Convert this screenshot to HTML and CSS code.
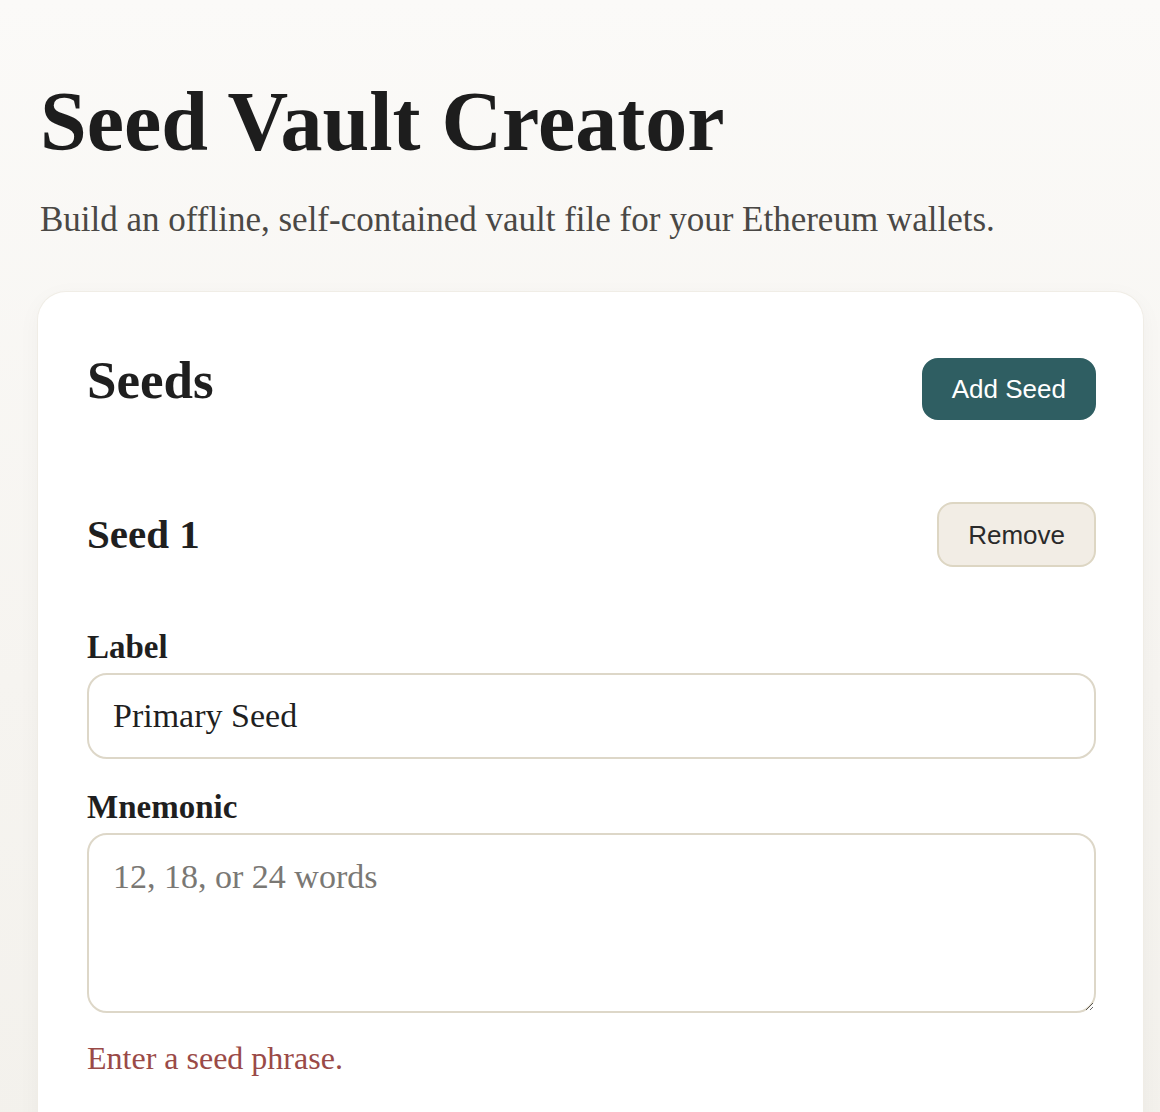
FILE: index.html
```html
<!DOCTYPE html>
<html lang="en">
<head>
<meta charset="utf-8">
<title>Seed Vault Creator</title>
<link rel="stylesheet" href="styles.css">
</head>
<body>
<main class="page">
  <h1 class="title">Seed Vault Creator</h1>
  <p class="subtitle">Build an offline, self-contained vault file for your Ethereum wallets.</p>
  <section class="card">
    <div class="card-head">
      <h2 class="card-title">Seeds</h2>
      <button class="btn btn-primary" type="button">Add Seed</button>
    </div>
    <div class="seed">
      <div class="seed-head">
        <h3 class="seed-title">Seed 1</h3>
        <button class="btn btn-secondary" type="button">Remove</button>
      </div>
      <label class="field-label" for="label1">Label</label>
      <input class="field-input" id="label1" type="text" value="Primary Seed">
      <label class="field-label field-label-gap" for="mn1">Mnemonic</label>
      <textarea class="field-textarea" id="mn1" placeholder="12, 18, or 24 words"></textarea>
      <p class="error">Enter a seed phrase.</p>
    </div>
  </section>
</main>
</body>
</html>
```

FILE: styles.css
```css
html, body {
  margin: 0;
  padding: 0;
}
body {
  background: linear-gradient(180deg, #fbfaf8 0%, #f6f4f0 60%, #f3f1ec 100%);
  min-height: 1112px;
  font-family: "Liberation Serif", "Times New Roman", serif;
  color: #1f1f1f;
}
.page {
  padding: 76px 0 0 38px;
}
.title {
  margin: 0 0 0 2px;
  font-size: 84px;
  line-height: 1.1;
  font-weight: 700;
  color: #1d1d1d;
}
.subtitle {
  margin: 27px 0 0 2px;
  font-size: 35px;
  line-height: 1.4;
  color: #4a4845;
}
.card {
  margin-top: 48px;
  width: 1105px;
  box-sizing: border-box;
  background: #ffffff;
  border-radius: 28px 28px 0 0;
  padding: 57px 47px 60px 49px;
  box-shadow: 0 0 0 1px #f0ede6, 0 6px 24px rgba(60, 50, 30, 0.04);
  min-height: 819px;
}
.card-head {
  display: flex;
  justify-content: space-between;
  align-items: baseline;
}
.card-title {
  margin: 0;
  font-size: 53px;
  line-height: 1.2;
  font-weight: 700;
}
.btn {
  font-family: "Liberation Sans", Arial, sans-serif;
  font-size: 26px;
  line-height: 30px;
  border-radius: 16px;
  cursor: pointer;
}
.btn-primary {
  background: #2f5e62;
  color: #ffffff;
  border: 2px solid #2f5e62;
  padding: 14px 28px;
}
.btn-secondary {
  background: #f2ede5;
  color: #2a2a2a;
  border: 2px solid #ddd6c3;
  padding: 16px 29px 15px;
}
.seed {
  margin-top: 82px;
}
.seed-head {
  display: flex;
  justify-content: space-between;
  align-items: center;
}
.seed-title {
  margin: 0;
  font-size: 41px;
  line-height: 1.2;
  font-weight: 700;
}
.field-label {
  display: block;
  margin: 61px 0 5px;
  font-size: 33px;
  line-height: 1.2;
  font-weight: 700;
  color: #1f1f1f;
}
.field-label-gap {
  margin-top: 29px;
}
.field-input,
.field-textarea {
  display: block;
  width: 100%;
  box-sizing: border-box;
  border: 2px solid #ddd7c8;
  border-radius: 20px;
  background: #ffffff;
  font-family: "Liberation Serif", "Times New Roman", serif;
  font-size: 34px;
  line-height: 1.2;
  color: #1f1f1f;
  outline: none;
}
.field-input {
  height: 86px;
  padding: 0 24px;
}
.field-textarea {
  height: 180px;
  padding: 22px 24px;
  resize: vertical;
}
.field-textarea::placeholder {
  color: #7a7874;
}
.error {
  margin: 26px 0 0;
  font-size: 32px;
  line-height: 1.2;
  color: #9a4a47;
}
```
